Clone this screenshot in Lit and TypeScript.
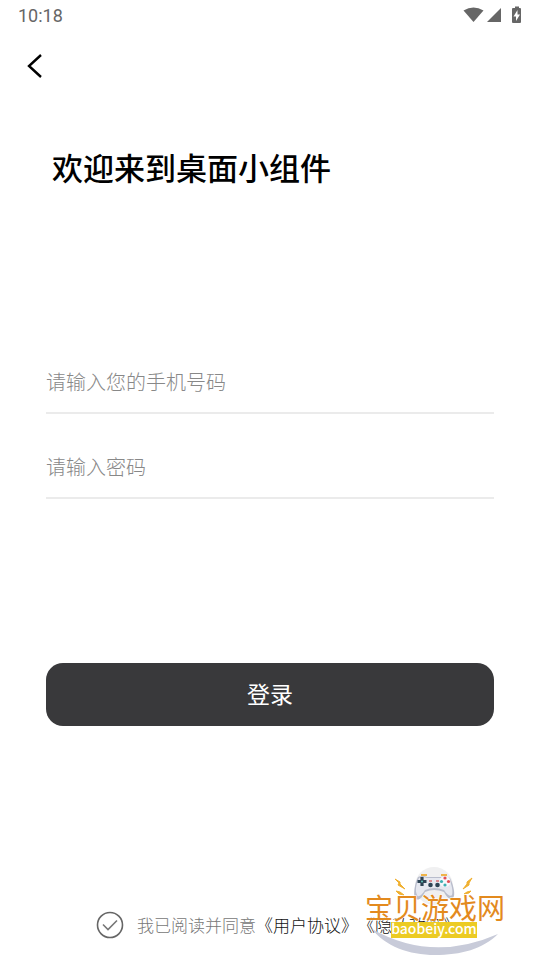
import { LitElement, html, css } from "lit";
import { customElement } from "lit/decorators.js";

@customElement("status-bar")
class StatusBar extends LitElement {
  static styles = css`
    :host {
      display: flex;
      align-items: center;
      justify-content: space-between;
      height: 32px;
      padding: 0 16px 0 18px;
      color: #666;
      font: 400 18px/32px Roboto, sans-serif;
    }
    .icons {
      display: block;
      width: 64px;
      height: 20px;
    }
  `;
  render() {
    return html`
      <span>10:18</span>
      <svg class="icons" viewBox="0 0 64 20" fill="#666" aria-hidden="true">
        <path d="M3.500 4.500Q13.500-1.600 23.500 4.500L13.500 16Z" />
        <path d="M41 2V16H27Z" />
        <path fill-rule="evenodd" d="M54 2h1V.5h4V2h1q1 0 1 1v13q0 1-1 1h-7q-1 0-1-1V3q0-1 1-1ZM57.500 4 53.500 10.500h2.500V15L60 8.500h-2.500Z" />
      </svg>
    `;
  }
}

@customElement("site-mark")
class SiteMark extends LitElement {
  static styles = css`
    :host {
      display: block;
      width: 150px;
      height: 100px;
    }
    .art {
      display: block;
      width: 100%;
      height: 100%;
    }
    .name {
      font: 400 28px "Noto Sans CJK SC", sans-serif;
      fill: #e38a1e;
      stroke: #fff;
      stroke-width: 1px;
      paint-order: stroke;
    }
    .domain {
      font: 500 14px "Noto Sans CJK SC", sans-serif;
      fill: #fff;
      text-anchor: middle;
    }
  `;
  render() {
    return html`
      <svg class="art" viewBox="0 0 150 100" role="img" aria-label="宝贝游戏网 baobeiy.com">
        <circle cx="74" cy="26" r="19" fill="#f0f0f1" />
        <path d="M12 69Q72 103 138 74C123 89 101 95 75 95C49 95 25 86 12 69Z" fill="#c8cbd9" />
        <g fill="#f0b030">
          <path d="M35 19l5 3 0 2 5 5-7-4 1-2ZM36 31l4 1 4 3-5-1ZM112 18l-5 4 0 2-4 5 6-4 0-2ZM111 31l-4 1-3 2 5-1Z" stroke="#f0b030" />
        </g>
        <path d="M61 15h6M81 15h6" stroke="#efb44a" stroke-width="2" />
        <path d="M58 17Q62 15 67 17H81Q86 15 90 18C93 24 95 32 94 36C92 42 87 38 84 32Q74 28 65 32C62 38 58 42 55 38C53 33 55 23 58 17Z" fill="#b9bdcc" />
        <path d="M59 18Q62 16 67 18H81Q86 16 89 19C92 25 93 31 92 35C91 37 87 35 84 30Q74 26 65 30C62 35 58 38 57 35C55 31 56 24 59 18Z" fill="#e6e8f0" />
        <path d="M62 17v9M57.500 21.500h9" stroke="#2d4354" stroke-width="3.200" />
        <circle cx="62" cy="21.500" r="1" fill="#65c7be" />
        <circle cx="85" cy="21.500" r="5.500" fill="#f7f7fb" />
        <circle cx="85" cy="18" r="1.600" fill="#e34e56" />
        <circle cx="81.500" cy="21.500" r="1.600" fill="#3eafb2" />
        <circle cx="88.500" cy="21.500" r="1.600" fill="#e34e56" />
        <circle cx="85" cy="25" r="1.600" fill="#3eafb2" />
        <circle cx="70.500" cy="25" r="2.300" fill="#2d4354" />
        <circle cx="77.500" cy="25" r="2.300" fill="#2d4354" />
        <path d="M69 21h3M76 21h3" stroke="#d66b70" stroke-width="1.500" />
        <text class="name" x="5" y="59">宝贝游戏网</text>
        <rect x="31" y="62" width="86" height="16" fill="#eccb23" />
        <text class="domain" x="74" y="74">baobeiy.com</text>
      </svg>
    `;
  }
}

@customElement("app-root")
class AppRoot extends LitElement {
  static styles = css`
    :host {
      display: flex;
      flex-direction: column;
      position: relative;
      min-height: 100vh;
      box-sizing: border-box;
      background: #fff;
      color: #000;
      font-family: "Noto Sans CJK SC", sans-serif;
      text-spacing-trim: space-all;
    }
    .back {
      align-self: flex-start;
      margin: 18px 0 0 18px;
      padding: 0;
      width: 32px;
      height: 32px;
      border: 0;
      background: none;
    }
    .back svg {
      display: block;
    }
    .title {
      margin: 61px 52px 0;
      font-size: 31px;
      line-height: 48px;
      font-weight: 500;
    }
    .form {
      display: flex;
      flex-direction: column;
      margin: 161px 46px 0;
    }
    .field {
      width: 100%;
      height: 62px;
      margin-bottom: 23px;
      box-sizing: border-box;
      padding: 0 0 2px;
      border: 0;
      border-bottom: 2px solid #ebebeb;
      border-radius: 0;
      outline: 0;
      background: none;
      font: 300 20px "Noto Sans CJK SC", sans-serif;
      color: #333;
    }
    .field::placeholder {
      color: #888;
      opacity: 1;
    }
    .login {
      height: 63px;
      margin-top: 141px;
      padding: 0 0 4px;
      border: 0;
      border-radius: 17px;
      background: #39393b;
      color: #fff;
      font: 400 23px "Noto Sans CJK SC", sans-serif;
    }
    .agreement {
      display: flex;
      align-items: center;
      margin: auto 0 0;
      padding: 0 0 20px 96px;
      font-size: 17px;
      line-height: 30px;
      font-weight: 300;
      white-space: nowrap;
    }
    .check {
      appearance: none;
      flex: none;
      width: 28px;
      height: 28px;
      margin: 0 13px 0 0;
      background: url("data:image/svg+xml,%3Csvg xmlns='http://www.w3.org/2000/svg' viewBox='0 0 28 28' fill='none' stroke='%23666' stroke-width='1.6'%3E%3Ccircle cx='14' cy='14' r='12.500'/%3E%3Cpath d='M7 13.500l5 5L21 9.500' stroke='%23777'/%3E%3C/svg%3E");
    }
    .consent {
      color: #777;
    }
    .agreement a {
      color: #111;
      text-decoration: none;
    }
    .mark {
      position: absolute;
      right: 30px;
      bottom: 0;
      pointer-events: none;
    }
  `;
  render() {
    return html`
      <status-bar></status-bar>
      <button class="back" aria-label="返回">
        <svg width="32" height="32" viewBox="0 0 32 32" fill="none" stroke="#000" stroke-width="2.400">
          <path d="M23 5 11 16 23 27" />
        </svg>
      </button>
      <h1 class="title">欢迎来到桌面小组件</h1>
      <form class="form" @submit=${(e: Event) => e.preventDefault()}>
        <input class="field" type="tel" aria-label="手机号码" placeholder="请输入您的手机号码" />
        <input class="field" type="password" aria-label="密码" placeholder="请输入密码" />
        <button class="login">登录</button>
      </form>
      <div class="agreement">
        <input class="check" id="agree" type="checkbox" />
        <label class="consent" for="agree">我已阅读并同意</label>
        <a href="#terms">《用户协议》</a>
        <a href="#privacy">《隐私政策》</a>
      </div>
      <site-mark class="mark"></site-mark>
    `;
  }
}
